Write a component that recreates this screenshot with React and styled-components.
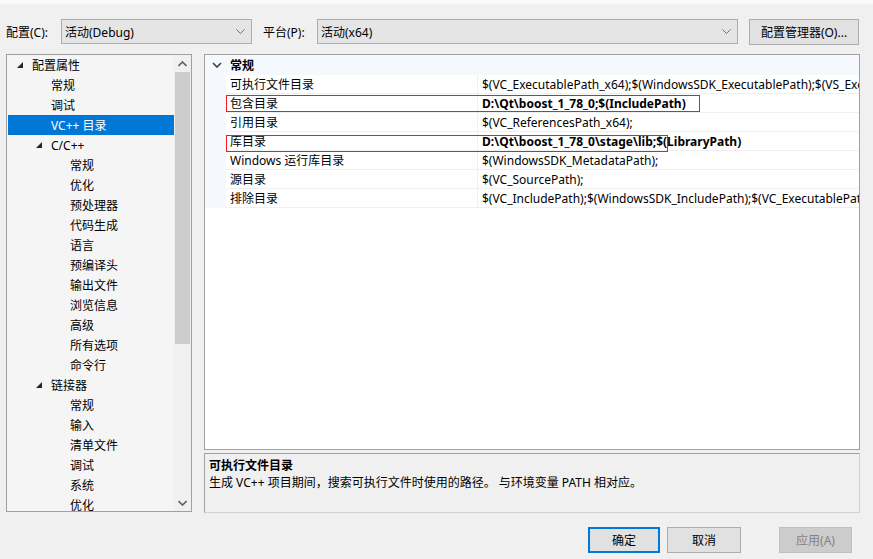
import styled, { createGlobalStyle } from "styled-components";

const GlobalStyle = createGlobalStyle`
  html, body {
    margin: 0;
    padding: 0;
    background: #f0f0f0;
  }
  body {
    font-family: "Segoe UI", "Noto Sans", "Noto Sans CJK SC", sans-serif;
    font-size: 12px;
    color: #000;
  }
`;

const treeItems = [
  { text: "配置属性", level: 0, open: true },
  { text: "常规", level: 1 },
  { text: "调试", level: 1 },
  { text: "VC++ 目录", level: 1, selected: true },
  { text: "C/C++", level: 1, open: true },
  { text: "常规", level: 2 },
  { text: "优化", level: 2 },
  { text: "预处理器", level: 2 },
  { text: "代码生成", level: 2 },
  { text: "语言", level: 2 },
  { text: "预编译头", level: 2 },
  { text: "输出文件", level: 2 },
  { text: "浏览信息", level: 2 },
  { text: "高级", level: 2 },
  { text: "所有选项", level: 2 },
  { text: "命令行", level: 2 },
  { text: "链接器", level: 1, open: true },
  { text: "常规", level: 2 },
  { text: "输入", level: 2 },
  { text: "清单文件", level: 2 },
  { text: "调试", level: 2 },
  { text: "系统", level: 2 },
  { text: "优化", level: 2 },
];

const props = [
  { name: "可执行文件目录", value: "$(VC_ExecutablePath_x64);$(WindowsSDK_ExecutablePath);$(VS_ExecutablePath);$(MSBuild_ExecutablePath)" },
  { name: "包含目录", value: "D:\\Qt\\boost_1_78_0;$(IncludePath)", bold: true },
  { name: "引用目录", value: "$(VC_ReferencesPath_x64);" },
  { name: "库目录", value: "D:\\Qt\\boost_1_78_0\\stage\\lib;$(LibraryPath)", bold: true },
  { name: "Windows 运行库目录", value: "$(WindowsSDK_MetadataPath);" },
  { name: "源目录", value: "$(VC_SourcePath);" },
  { name: "排除目录", value: "$(VC_IncludePath);$(WindowsSDK_IncludePath);$(VC_ExecutablePath_x64);" },
];

function Chevron({ up }) {
  return (
    <svg width="9" height="6" viewBox="0 0 9 6">
      <polyline
        points={up ? "0.5,5 4.5,1 8.5,5" : "0.5,1 4.5,5 8.5,1"}
        fill="none"
        stroke="#606060"
        strokeWidth="1.6"
      />
    </svg>
  );
}

function Expander() {
  return (
    <svg width="6" height="6" viewBox="0 0 6 6">
      <polygon points="6,0 6,6 0,6" fill="#262626" />
    </svg>
  );
}

function Dropdown({ value, width }) {
  return (
    <Select $width={width}>
      <span>{value}</span>
      <svg width="9" height="5" viewBox="0 0 9 5">
        <polyline points="0.5,0.5 4.5,4.5 8.5,0.5" fill="none" stroke="#707070" strokeWidth="1" />
      </svg>
    </Select>
  );
}

export default function App() {
  return (
    <>
      <GlobalStyle />
      <Window>
        <Toolbar>
          <Label $width={55}>配置(C):</Label>
          <Dropdown value="活动(Debug)" width={191} />
          <Label $width={54} $ml={11}>平台(P):</Label>
          <Dropdown value="活动(x64)" width={421} />
          <Button $width={110} $ml={11}>配置管理器(O)...</Button>
        </Toolbar>

        <Main>
          <TreePanel>
            <TreeList>
              {treeItems.map((it, i) => (
                <TreeRow key={i} $selected={it.selected}>
                  <Indent $level={it.level}>
                    {it.open ? <Expander /> : null}
                  </Indent>
                  {it.text}
                </TreeRow>
              ))}
            </TreeList>
            <Scrollbar>
              <ScrollArrow><Chevron up /></ScrollArrow>
              <Track>
                <Thumb />
              </Track>
              <ScrollArrow><Chevron /></ScrollArrow>
            </Scrollbar>
          </TreePanel>

          <RightColumn>
            <Grid>
              <CategoryRow>
                <Gutter>
                  <svg width="10" height="6" viewBox="0 0 10 6">
                    <polyline points="1,1 5,5 9,1" fill="none" stroke="#404040" strokeWidth="1.6" />
                  </svg>
                </Gutter>
                <CategoryTitle>常规</CategoryTitle>
              </CategoryRow>
              {props.map((p, i) => (
                <PropRow key={i}>
                  <Gutter />
                  <NameCell>{p.name}</NameCell>
                  <ValueCell $bold={p.bold}>{p.value}</ValueCell>
                </PropRow>
              ))}
              <Highlight style={{ top: 40, width: 474 }} />
              <Highlight style={{ top: 80, width: 442 }} />
            </Grid>
            <Description>
              <DescTitle>可执行文件目录</DescTitle>
              <DescText>生成 VC++ 项目期间，搜索可执行文件时使用的路径。 与环境变量 PATH 相对应。</DescText>
            </Description>
          </RightColumn>
        </Main>

        <Footer>
          <Button $width={72} $default>确定</Button>
          <Button $width={74} $ml={7}>取消</Button>
          <Button $width={73} $ml={38} $disabled>应用(A)</Button>
        </Footer>
      </Window>
    </>
  );
}

const Window = styled.div`
  width: 873px;
  height: 559px;
  box-sizing: border-box;
  border-top: 4px solid #fafafa;
  background: #f0f0f0;
  overflow: hidden;
`;

const Toolbar = styled.div`
  display: flex;
  align-items: center;
  height: 27px;
  margin-top: 14px;
  padding-left: 6px;
`;

const Label = styled.span`
  width: ${(p) => p.$width}px;
  flex: none;
  margin-left: ${(p) => p.$ml || 0}px;
  white-space: nowrap;
`;

const Select = styled.div`
  box-sizing: border-box;
  width: ${(p) => p.$width}px;
  flex: none;
  height: 25px;
  border: 1px solid #adadad;
  background: #e5e5e5;
  display: flex;
  align-items: center;
  justify-content: space-between;
  padding: 0 6px 0 3px;
`;

const Button = styled.div`
  box-sizing: border-box;
  width: ${(p) => p.$width}px;
  flex: none;
  height: 26px;
  margin-left: ${(p) => p.$ml || 0}px;
  display: flex;
  align-items: center;
  justify-content: center;
  background: ${(p) => (p.$disabled ? "#cccccc" : "#e1e1e1")};
  border: ${(p) => (p.$default ? "2px solid #0078d7" : p.$disabled ? "1px solid #bfbfbf" : "1px solid #adadad")};
  color: ${(p) => (p.$disabled ? "#838383" : "#000")};
  white-space: nowrap;
`;

const Main = styled.div`
  display: flex;
  margin-top: 9px;
  padding-left: 6px;
  gap: 12px;
`;

const TreePanel = styled.div`
  box-sizing: border-box;
  width: 186px;
  height: 458px;
  border: 1px solid #a0a0a0;
  background: #f5f5f5;
  display: flex;
  overflow: hidden;
`;

const TreeList = styled.div`
  flex: 1;
  padding-left: 1px;
  overflow: hidden;
`;

const TreeRow = styled.div`
  height: 20px;
  display: flex;
  align-items: center;
  white-space: nowrap;
  background: ${(p) => (p.$selected ? "#0078d7" : "transparent")};
  color: ${(p) => (p.$selected ? "#fff" : "#000")};
`;

const Indent = styled.span`
  width: ${(p) => 24 + p.$level * 19}px;
  flex: none;
  display: flex;
  justify-content: flex-end;
  padding-right: 9px;
  box-sizing: border-box;
`;

const Scrollbar = styled.div`
  width: 17px;
  flex: none;
  background: #f0f0f0;
  display: flex;
  flex-direction: column;
`;

const ScrollArrow = styled.div`
  height: 17px;
  display: flex;
  align-items: center;
  justify-content: center;
`;

const Track = styled.div`
  flex: 1;
  padding: 0 1px;
`;

const Thumb = styled.div`
  height: 272px;
  background: #cdcdcd;
`;

const RightColumn = styled.div`
  width: 656px;
  display: flex;
  flex-direction: column;
  gap: 3px;
`;

const Grid = styled.div`
  position: relative;
  box-sizing: border-box;
  height: 396px;
  border: 1px solid #a0a0a0;
  background: #fff;
  overflow: hidden;
`;

const CategoryRow = styled.div`
  display: flex;
  align-items: center;
  height: 20px;
  background: #f5f8fc;
`;

const Gutter = styled.div`
  width: 21px;
  flex: none;
  align-self: stretch;
  background: #f5f8fc;
  display: flex;
  align-items: center;
  justify-content: center;
  padding-left: 2px;
  box-sizing: border-box;
`;

const CategoryTitle = styled.span`
  font-weight: 700;
  padding-left: 4px;
`;

const PropRow = styled.div`
  display: flex;
  height: 19px;
  white-space: nowrap;
`;

const NameCell = styled.div`
  box-sizing: border-box;
  width: 252px;
  flex: none;
  padding-left: 4px;
  display: flex;
  align-items: center;
  border-bottom: 1px solid #f0f0f0;
  border-right: 1px solid #f0f0f0;
`;

const ValueCell = styled.div`
  flex: 1;
  padding-left: 4px;
  display: flex;
  align-items: center;
  border-bottom: 1px solid #f0f0f0;
  overflow: hidden;
  font-weight: ${(p) => (p.$bold ? 700 : 400)};
`;

const Highlight = styled.div`
  position: absolute;
  left: 21px;
  height: 17px;
  border: 1px solid #ee1c1c;
  box-sizing: border-box;
  pointer-events: none;
`;

const Description = styled.div`
  box-sizing: border-box;
  height: 60px;
  border: 1px solid #a0a0a0;
  border-right-color: #d0d0d0;
  border-bottom-color: #d0d0d0;
  background: #f0f0f0;
  padding: 3px 4px;
`;

const DescTitle = styled.div`
  font-weight: 700;
  line-height: 17px;
`;

const DescText = styled.div`
  line-height: 17px;
`;

const Footer = styled.div`
  display: flex;
  justify-content: flex-end;
  padding-right: 21px;
  margin-top: 14px;
`;
